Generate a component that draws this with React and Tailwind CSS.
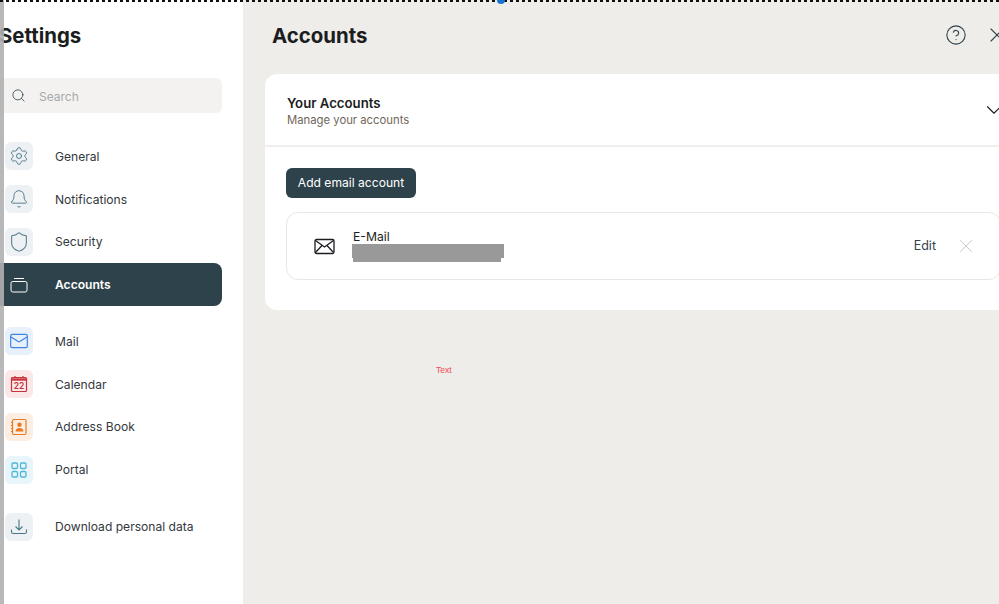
import { Search, Settings, Bell, Shield, Mail, ChevronDown, X, CircleHelp } from 'lucide-react';

const AccountsIcon = () => (
    <svg width="18" height="18" viewBox="0 0 18 18" fill="none" stroke="currentColor" strokeWidth="1">
        <rect x="1" y="5.5" width="16" height="10.5" rx="1.8" />
        <path d="M4 2.5h10" />
    </svg>
);

const CalendarIcon = () => (
    <svg width="18" height="18" viewBox="0 0 18 18" fill="none" stroke="currentColor" strokeWidth="1.2">
        <rect x="1.5" y="2.5" width="15" height="14" rx="1" />
        <path d="M1.5 4.5h15" strokeWidth="2.4" />
        <path d="M5 1v2M13 1v2" />
        <text x="9" y="14.2" textAnchor="middle" fontSize="8.5" fontWeight="600" fontFamily="Inter, sans-serif" fill="currentColor" stroke="none">22</text>
    </svg>
);

const ContactIcon = () => (
    <svg width="18" height="18" viewBox="0 0 18 18" fill="none" stroke="currentColor" strokeWidth="1.2">
        <rect x="2.5" y="1.5" width="13.5" height="15" rx="1.2" />
        <path d="M1 4.5h2.5M1 7.5h2.5M1 10.5h2.5M1 13.5h2.5" strokeDasharray="1.6 1" />
        <circle cx="9.5" cy="6.8" r="2.2" fill="currentColor" stroke="none" />
        <path d="M5.5 13.5c0-2.6 1.8-3.6 4-3.6s4 1 4 3.6z" fill="currentColor" stroke="none" />
    </svg>
);

const PortalIcon = () => (
    <svg width="16" height="16" viewBox="0 0 16 16" fill="none" stroke="currentColor" strokeWidth="1.3">
        <rect x="1" y="1" width="5.5" height="5.5" rx="1.3" />
        <rect x="9.5" y="1" width="5.5" height="5.5" rx="1.3" />
        <rect x="1" y="9.5" width="5.5" height="5.5" rx="1.3" />
        <rect x="9.5" y="9.5" width="5.5" height="5.5" rx="1.3" />
    </svg>
);

const DownloadIcon = () => (
    <svg width="18" height="18" viewBox="0 0 18 18" fill="none" stroke="currentColor" strokeWidth="1.1">
        <path d="M9 1.5v10M5.5 8.5 9 12l3.5-3.5" />
        <path d="M1.5 11.5v2.2c0 1 .8 1.8 1.8 1.8h11.4c1 0 1.8-.8 1.8-1.8v-2.2" />
    </svg>
);

const EnvelopeIcon = () => (
    <svg width="21" height="17" viewBox="0 0 21 17" fill="none" stroke="#1b1d20" strokeWidth="1.3">
        <rect x="1" y="1.5" width="19" height="14" rx="1.5" />
        <path d="M1.5 2.5 10.5 9l9-6.5M1.5 14.5l6.5-7M19.5 14.5l-6.5-7" />
    </svg>
);

const SideItem = ({ icon, label, tile, active }) => (
    <div className={`h-[42.75px] w-[222px] flex items-center pl-[5px] rounded-r-lg ${active ? 'bg-[#2e424b] text-white font-semibold' : 'text-[#33383d]'}`}>
        <div className={`w-7 h-7 rounded-md flex items-center justify-center shrink-0 ${tile}`}>{icon}</div>
        <span className="ml-[22px] mt-px text-[12.1px]">{label}</span>
    </div>
);

const App = () => {
    const settingsItems = [
        { label: 'General', tile: 'bg-[#edf1f4] text-[#4d7587]', icon: <Settings size={20} strokeWidth={1.1} /> },
        { label: 'Notifications', tile: 'bg-[#edf1f4] text-[#4d7587]', icon: <Bell size={20} strokeWidth={1.1} /> },
        { label: 'Security', tile: 'bg-[#edf1f4] text-[#4d7587]', icon: <Shield size={22} strokeWidth={1.1} /> },
        { label: 'Accounts', tile: 'text-white', icon: <AccountsIcon />, active: true },
    ];
    const appItems = [
        { label: 'Mail', tile: 'bg-[#e7f0fb] text-[#3f86e0]', icon: <Mail size={20} strokeWidth={1.4} /> },
        { label: 'Calendar', tile: 'bg-[#fae8e8] text-[#c7343c]', icon: <CalendarIcon /> },
        { label: 'Address Book', tile: 'bg-[#fdeee4] text-[#ea7a22]', icon: <ContactIcon /> },
        { label: 'Portal', tile: 'bg-[#e8f5fa] text-[#4fb6d8]', icon: <PortalIcon /> },
    ];

    return (
        <div className="relative w-[999px] h-[604px] overflow-hidden flex bg-[#eeede9] text-[#1b1d20]" style={{ fontFamily: 'Inter, sans-serif' }}>
            {/* sidebar */}
            <div className="w-[243px] h-full shrink-0 bg-white flex flex-col">
                <h1 className="mt-[22px] -ml-px h-[27px] text-[20.4px] leading-[27px] font-bold">Settings</h1>
                <div className="mt-[29px] h-[35px] w-[222px] bg-[#f3f2f0] rounded-r-md flex items-center pl-[11px] shrink-0">
                    <Search size={15} strokeWidth={1.3} className="text-[#2e424b]" />
                    <span className="ml-[13px] mt-[3px] text-[12px] text-[#a9a9a9]">Search</span>
                </div>
                <div className="mt-[22px] flex flex-col">
                    {settingsItems.map((item) => <SideItem key={item.label} {...item} />)}
                </div>
                <div className="mt-[14px] flex flex-col">
                    {appItems.map((item) => <SideItem key={item.label} {...item} />)}
                </div>
                <div className="mt-[14.5px]">
                    <SideItem label="Download personal data" tile="bg-[#edf1f4] text-[#4d7587]" icon={<DownloadIcon />} />
                </div>
            </div>

            {/* main */}
            <div className="flex-1 min-w-0 flex flex-col">
                <div className="h-[74px] shrink-0 pl-[29px] flex items-start justify-between">
                    <h2 className="mt-[22px] text-[20.4px] leading-[27px] font-bold">Accounts</h2>
                    <div className="mt-[23px] flex items-center gap-[18px] -mr-[10px] text-[#2e424b]">
                        <CircleHelp size={22} strokeWidth={1.2} />
                        <X size={24} strokeWidth={1.1} />
                    </div>
                </div>
                <div className="ml-[22px] w-[757px] h-[236px] bg-white rounded-xl shrink-0">
                    <div className="h-[73px] px-[22px] flex items-center justify-between border-b-2 border-[#f0efec]">
                        <div className="mt-[3px]">
                            <div className="text-[13.2px] leading-[17px] font-semibold">Your Accounts</div>
                            <div className="text-[11.3px] leading-[16px] text-[#6f675c]">Manage your accounts</div>
                        </div>
                        <ChevronDown size={26} strokeWidth={1} className="mr-[-7px]" />
                    </div>
                    <div className="px-[21px] pt-[21px]">
                        <button className="h-[30px] w-[130px] bg-[#2e424b] text-white text-[12.1px] rounded-md">Add email account</button>
                        <div className="mt-[14px] h-[68px] border border-[#e8e7e4] rounded-xl flex items-center pl-[27px] pr-[23px]">
                            <EnvelopeIcon />
                            <div className="ml-[18px] -mt-px">
                                <div className="text-[12.2px] leading-[14px] text-[#1b1d20]">E-Mail</div>
                                <div className="h-[18px] w-[152px] -ml-px">
                                    <div className="h-[14px] bg-[#999999]" />
                                    <div className="ml-[1px] h-[4px] w-[148px] bg-[#999999]" />
                                </div>
                            </div>
                            <span className="ml-auto text-[12.5px] text-[#33434b]">Edit</span>
                            <X size={22} strokeWidth={0.8} className="ml-[19px] text-[#b3b8bb]" />
                        </div>
                    </div>
                </div>
                <div className="ml-[193px] mt-[55px] text-[8.5px] leading-[11px] text-[#f0484f]" style={{ fontFamily: '"Liberation Sans", sans-serif' }}>Text</div>
            </div>

            {/* overlays from the capture */}
            <div className="absolute left-0 top-0 w-1 h-full bg-[#b0b0b0]/90" />
            <div className="absolute left-0 top-0 w-full h-[2px] bg-[repeating-linear-gradient(90deg,#111_0,#111_3px,transparent_3px,transparent_6px)]" />
            <div className="absolute left-[497px] -top-[4px] w-2 h-2 rounded-full bg-[#1a73d4]" />
        </div>
    );
};

export default App;
